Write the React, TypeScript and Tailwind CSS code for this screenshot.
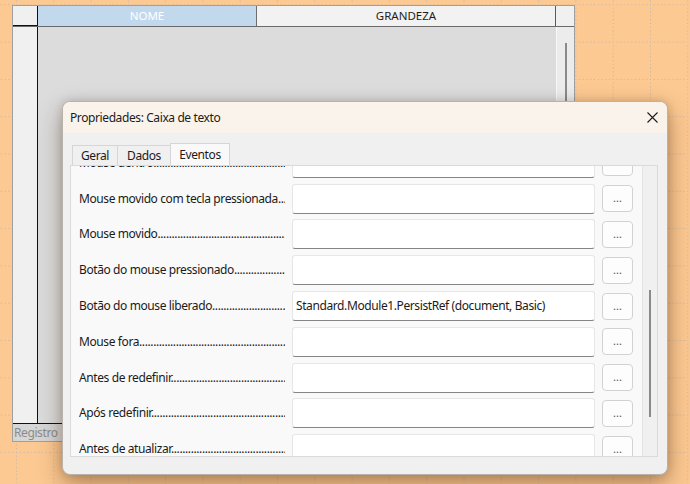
import React from 'react';

// ===================================================================
// Dados
// ===================================================================

interface EventRow {
  label: string;
  value?: string;
}

const rows: EventRow[] = [
  { label: 'Mouse dentro' },
  { label: 'Mouse movido com tecla pressionada' },
  { label: 'Mouse movido' },
  { label: 'Botão do mouse pressionado' },
  { label: 'Botão do mouse liberado', value: 'Standard.Module1.PersistRef (document, Basic)' },
  { label: 'Mouse fora' },
  { label: 'Antes de redefinir' },
  { label: 'Após redefinir' },
  { label: 'Antes de atualizar' },
];

const DOTS = '.'.repeat(120);

const uiFont = "font-['Noto_Sans','Open_Sans',sans-serif] tracking-[-0.4px]";

// ===================================================================
// Fundo pontilhado
// ===================================================================

function DottedGrid() {
  const step = 37.3;
  const dots = Array.from({ length: 10 }, (_, i) => (i * step) / 10);
  return (
    <svg className="absolute inset-0" width="690" height="484">
      <defs>
        <pattern id="grid" x="15.9" y="4.3" width={step} height={step} patternUnits="userSpaceOnUse">
          {dots.map((d) => (
            <rect key={`h${d}`} x={d} y={0} width="1" height="1" fill="#b9b2ab" />
          ))}
          {dots.slice(1).map((d) => (
            <rect key={`v${d}`} x={0} y={d} width="1" height="1" fill="#b9b2ab" />
          ))}
        </pattern>
      </defs>
      <rect width="690" height="484" fill="url(#grid)" />
    </svg>
  );
}

// ===================================================================
// Tabela ao fundo
// ===================================================================

function TableControl() {
  return (
    <div className="relative ml-[12px] mt-[4px] flex h-[437px] w-[563px] flex-col border border-[#a0a0a0] bg-[#dcdcdc]">
      {/* cabeçalho */}
      <div className="flex h-[21px] border-b border-[#6a6a6a] font-['Noto_Sans','Open_Sans',sans-serif] text-[11.5px] leading-none">
        <div className="w-[25px] border-r border-b border-[#111] bg-[#f0f0f0]" />
        <div className="flex w-[219px] items-center justify-center border-r border-[#6e6e6e] bg-[#c2d9ed] text-white">
          NOME
        </div>
        <div className="flex w-[299px] items-center justify-center border-r border-[#5a5a5a] bg-[#f2f2f2] text-[#1e1e1e]">
          GRANDEZA
        </div>
        <div className="flex-1 bg-[#f0f0f0]" />
      </div>

      {/* corpo */}
      <div className="flex flex-1">
        <div className="w-[25px] border-r border-[#111] bg-[#f0f0f0]" />
        <div className="flex-1 bg-[#dcdcdc]" />
        <div className="w-[18px] border-l border-[#f8f8f8] bg-[#ececec] pt-[16px]">
          <div className="ml-[8px] h-[300px] w-[2px] bg-[#8a8a8a]" />
        </div>
      </div>

      {/* rodapé */}
      <div className="flex h-[18px] border-t border-[#111]">
        <div className={`flex w-[46px] items-center bg-[#d6d6d6] pl-[1px] text-[12px] leading-none text-[#8c8c8c] ${uiFont}`}>
          Registro
        </div>
        <div className="flex-1 bg-[#dcdcdc]" />
      </div>
    </div>
  );
}

// ===================================================================
// Diálogo
// ===================================================================

function Tab({ label, width, active }: { label: string; width: string; active?: boolean }) {
  return active ? (
    <div className={`-mb-px flex h-[23px] items-center justify-center border border-b-0 border-[#d6d6d6] bg-[#f9f9f9] pb-[1px] text-[12px] text-[#1b1b1b] ${width}`}>
      {label}
    </div>
  ) : (
    <div className={`flex h-[20px] items-center justify-center border border-r-0 border-b-0 border-[#d6d6d6] bg-[#f0f0f0] text-[12px] text-[#1b1b1b] ${width}`}>
      {label}
    </div>
  );
}

function Row({ row }: { row: EventRow }) {
  return (
    <div className="flex h-[35.8px] items-center pl-[8px]">
      <div className="w-[213px]">
        <div className="w-[206px] overflow-hidden whitespace-nowrap text-[12px] text-[#1b1b1b]">
          {row.label}
          {DOTS}
        </div>
      </div>
      <div className="flex h-[30px] w-[303px] items-center overflow-hidden whitespace-nowrap rounded-[3px] border border-[#e6e6e6] border-b-[#858585] bg-white px-[3px] text-[12px] text-[#1b1b1b]">
        {row.value}
      </div>
      <button className="ml-[7px] flex h-[27px] w-[31px] items-center justify-center rounded-[4px] border border-[#d2d2d2] bg-[#fdfdfd] pb-[2px] text-[11px] leading-none tracking-normal text-[#555]">
        ...
      </button>
    </div>
  );
}

function PropertiesDialog() {
  return (
    <div
      className={`absolute left-[62px] top-[101px] flex h-[374px] w-[606px] flex-col overflow-hidden rounded-[8px] border border-[#b9b2aa] bg-[#f0f0f0] shadow-[0_10px_24px_rgba(60,30,0,0.38),0_0_10px_rgba(0,0,0,0.15)] ${uiFont}`}
    >
      {/* barra de título */}
      <div className="flex h-[31px] items-center justify-between bg-[#faf3ec] pl-[7px] pr-[9px]">
        <span className="text-[12px] text-[#1b1b1b]">Propriedades: Caixa de texto</span>
        <svg width="11" height="11" viewBox="0 0 11 11">
          <path d="M0.5 0.5 L10.5 10.5 M10.5 0.5 L0.5 10.5" stroke="#1b1b1b" strokeWidth="1.1" />
        </svg>
      </div>

      {/* abas */}
      <div className="ml-[9px] mt-[10px] flex items-end">
        <Tab label="Geral" width="w-[45px]" />
        <Tab label="Dados" width="w-[53px]" />
        <Tab label="Eventos" width="w-[60px]" active />
      </div>

      {/* painel */}
      <div className="ml-[7px] flex h-[292px] w-[588px] overflow-hidden border border-[#dadada] bg-[#f9f9f9]">
        <div className="flex-1 overflow-hidden">
          <div className="-mt-[21px]">
            {rows.map((row) => (
              <Row key={row.label} row={row} />
            ))}
          </div>
        </div>
        <div className="w-[15px] border-l border-[#e4e4e4] bg-[#f0f0f0] pt-[124px]">
          <div className="ml-[6px] h-[127px] w-[2px] bg-[#8a8a8a]" />
        </div>
      </div>
    </div>
  );
}

// ===================================================================
// App
// ===================================================================

export default function App() {
  return (
    <div className="relative h-[484px] w-[690px] overflow-hidden bg-[#fdc992]">
      <DottedGrid />
      <div className="relative pt-px">
        <TableControl />
      </div>
      <PropertiesDialog />
    </div>
  );
}
